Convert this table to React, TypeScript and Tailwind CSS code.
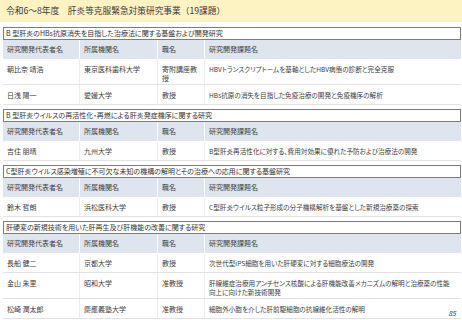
import React from 'react';

type Row = { name: string; org: string; title: React.ReactNode; topic: React.ReactNode; tall?: boolean };
type Section = { heading: string; rows: Row[] };

const sections: Section[] = [
  {
    heading: 'B 型肝炎のHBs抗原消失を目指した治療法に関する基盤および開発研究',
    rows: [
      { name: '朝比奈 靖浩', org: '東京医科歯科大学', title: <>寄附講座教<br />授</>, topic: 'HBVトランスクリプトームを基軸としたHBV病態の診断と完全克服', tall: true },
      { name: '日浅 陽一', org: '愛媛大学', title: '教授', topic: 'HBs抗原の消失を目指した免疫治療の開発と免疫機序の解析' },
    ],
  },
  {
    heading: 'B 型肝炎ウイルスの再活性化・再燃による肝炎発症機序に関する研究',
    rows: [
      { name: '吉住 朋晴', org: '九州大学', title: '教授', topic: 'B型肝炎再活性化に対する、費用対効果に優れた予防および治療法の開発' },
    ],
  },
  {
    heading: 'C型肝炎ウイルス感染増殖に不可欠な未知の機構の解明とその治療への応用に関する基盤研究',
    rows: [
      { name: '鈴木 哲朗', org: '浜松医科大学', title: '教授', topic: 'C型肝炎ウイルス粒子形成の分子機構解析を基盤とした新規治療薬の探索' },
    ],
  },
  {
    heading: '肝硬変の新規技術を用いた肝再生及び肝機能の改善に関する研究',
    rows: [
      { name: '長船 健二', org: '京都大学', title: '教授', topic: '次世代型iPS細胞を用いた肝硬変に対する細胞療法の開発' },
      { name: '金山 朱里', org: '昭和大学', title: '准教授', topic: <>肝線維症治療用アンチセンス核酸による肝機能改善メカニズムの解明と治療薬の性能<br />向上に向けた新技術開発</>, tall: true },
      { name: '松崎 潤太郎', org: '慶應義塾大学', title: '准教授', topic: '細胞外小胞を介した肝前駆細胞の抗線維化活性の解明' },
    ],
  },
];

const cols = 'grid grid-cols-[76px_78px_47px_1fr]';

const App: React.FC = () => {
  return (
    <div className="relative w-[462px] h-[320px] overflow-hidden bg-white text-[#404040] font-['Noto_Sans_CJK_JP','Noto_Sans',sans-serif]">
      {/* banner */}
      <div className="h-[22px] bg-[#fdf2c2] flex items-center px-[6px] text-[8.7px] text-[#3c3c3c]">
        令和6～8年度　肝炎等克服緊急対策研究事業（19課題）
      </div>

      <div className="flex flex-col gap-[4px] pt-[5px] pl-[3px] pr-[1px] [font-feature-settings:'palt']">
        {sections.map((s, i) => (
          <div key={i}>
            <div className="h-[13px] border border-[#7c7c7c] bg-white flex items-center px-[2px] text-[7px] leading-none text-[#333]">
              {s.heading}
            </div>
            <div className={`${cols} h-[19px] bg-[#dfe5ee] text-[7px] leading-none items-stretch`}>
              <div className="flex items-center pl-[4px]">研究開発代表者名</div>
              <div className="flex items-center pl-[4px] border-l border-white">所属機関名</div>
              <div className="flex items-center pl-[4px] border-l border-white">職名</div>
              <div className="flex items-center pl-[4px] border-l border-white">研究開発課題名</div>
            </div>
            {s.rows.map((r, j) => (
              <div
                key={j}
                className={`${cols} ${r.tall ? 'h-[26px]' : 'h-[20px]'} border-b border-[#e2e2e2] text-[7px] leading-[8.5px]`}
              >
                <div className="pl-[4px] pt-[6px]">{r.name}</div>
                <div className="pl-[4px] pt-[6px] border-l border-[#ececec]">{r.org}</div>
                <div className="pl-[4px] pt-[6px] border-l border-[#ececec]">{r.title}</div>
                <div className="pl-[4px] pt-[6px] border-l border-[#ececec] whitespace-nowrap text-[6.6px]">{r.topic}</div>
              </div>
            ))}
          </div>
        ))}
      </div>

      <div className="absolute right-[6px] bottom-[3px] text-[7px] italic leading-none text-[#444]">85</div>
    </div>
  );
};

export default App;
